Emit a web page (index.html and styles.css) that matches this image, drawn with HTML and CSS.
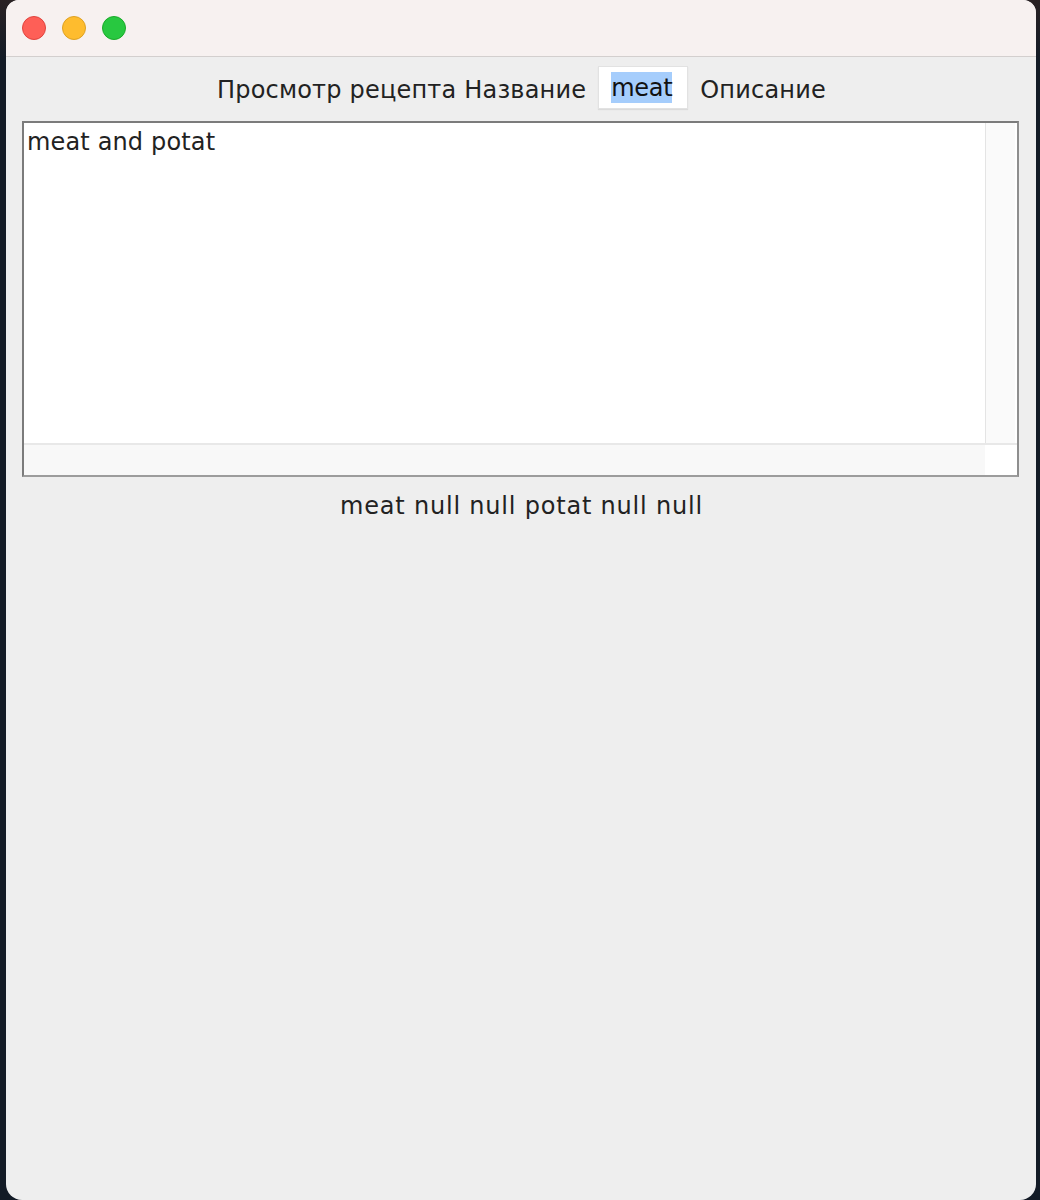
FILE: index.html
```html
<!DOCTYPE html>
<html>
<head>
<meta charset="utf-8">
<link rel="stylesheet" href="styles.css">
</head>
<body>
<div class="desktop">
  <div class="window">
    <div class="titlebar">
      <span class="light red"></span>
      <span class="light yellow"></span>
      <span class="light green"></span>
    </div>
    <div class="content">
      <div class="header">
        <span class="label">Просмотр рецепта Название</span>
        <span class="field"><span class="sel">meat</span></span>
        <span class="label">Описание</span>
      </div>
      <div class="scrollpane">
        <div class="viewport">
          <div class="textarea">meat and potat</div>
          <div class="vbar"></div>
        </div>
        <div class="hrow">
          <div class="hbar"></div>
          <div class="corner"></div>
        </div>
      </div>
      <div class="result">meat null null potat null null</div>
    </div>
  </div>
</div>
</body>
</html>
```

FILE: styles.css
```css
html, body {
  margin: 0;
  padding: 0;
}
body {
  width: 1040px;
  height: 1200px;
  overflow: hidden;
  background: #121a24;
  font-family: "DejaVu Sans", "Liberation Sans", sans-serif;
}
.desktop {
  height: 1200px;
  padding-left: 6px;
  box-sizing: border-box;
  background: linear-gradient(to bottom, #2a2224 0px, #131b26 60px, #131b26 100%);
}
.window {
  width: 1030px;
  height: 1200px;
  background: #eeeeee;
  border-radius: 13px 13px 16px 16px;
  overflow: hidden;
  display: flex;
  flex-direction: column;
}
.titlebar {
  height: 56px;
  flex: 0 0 56px;
  background: #f7f1f0;
  border-bottom: 1px solid #d3cfce;
  display: flex;
  align-items: center;
  padding-left: 16px;
  gap: 16px;
  box-sizing: content-box;
}
.light {
  width: 24px;
  height: 24px;
  border-radius: 50%;
  box-sizing: border-box;
}
.red { background: #fe5f57; border: 1px solid #e0443e; }
.yellow { background: #febc2e; border: 1px solid #dea123; }
.green { background: #28c840; border: 1px solid #1aab29; }
.content {
  flex: 1;
  padding: 9px 17px 0 16px;
  display: flex;
  flex-direction: column;
}
.header {
  display: flex;
  justify-content: center;
  align-items: center;
  gap: 12px;
  height: 43px;
  margin-left: 2px;
}
.label {
  font-size: 24px;
  color: #222222;
  padding-top: 4px;
  letter-spacing: 0.2px;
}
.field {
  width: 90px;
  height: 43px;
  background: #ffffff;
  border: 1px solid #e2e2e2;
  box-sizing: border-box;
  box-shadow: 0 1px 1px rgba(0,0,0,0.08);
  display: flex;
  align-items: center;
  padding-left: 12px;
  font-size: 24px;
  color: #111111;
}
.sel {
  background: #a5cdfc;
  line-height: 31px;
  padding: 2px 0 0 0;
  height: 31px;
  box-sizing: border-box;
  line-height: 29px;
  letter-spacing: -0.3px;
}
.scrollpane {
  margin-top: 12px;
  height: 356px;
  border: 2px solid #7b7b7b;
  border-bottom-color: #9c9c9c;
  border-right-color: #8e8e8e;
  background: #ffffff;
  box-sizing: border-box;
  display: flex;
  flex-direction: column;
}
.viewport {
  flex: 1;
  display: flex;
}
.textarea {
  flex: 1;
  font-size: 24px;
  color: #222222;
  padding: 4px 0 0 3px;
  line-height: 30px;
  letter-spacing: 0.15px;
}
.vbar {
  width: 29px;
  background: #fafafa;
  border-left: 1px solid #e4e4e4;
  margin-right: 2px;
}
.hrow {
  height: 30px;
  display: flex;
  border-top: 2px solid #e8e8e8;
}
.hbar {
  flex: 1;
  background: #f8f8f8;
}
.corner {
  width: 32px;
  background: #ffffff;
}
.result {
  text-align: center;
  font-size: 24px;
  color: #222222;
  margin-top: 15px;
  margin-left: 2px;
  letter-spacing: 0.8px;
}
```
